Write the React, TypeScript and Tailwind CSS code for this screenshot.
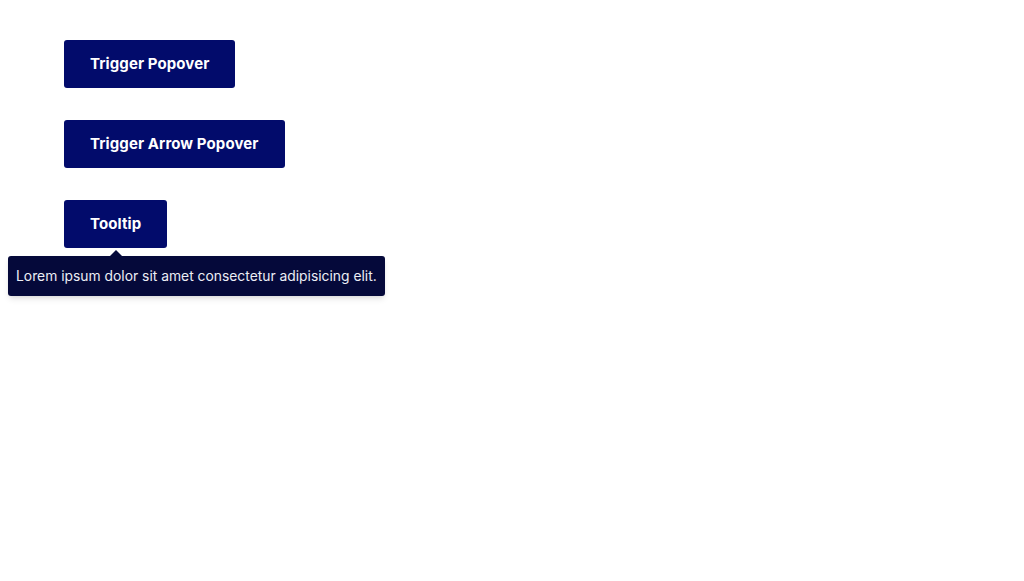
import React from 'react';

const btn =
  'h-12 px-[26px] rounded-[3px] bg-[#020b6b] text-white text-[15px] font-bold tracking-[0.1px] flex items-center';

export default function App() {
  return (
    <div className="min-h-screen bg-white font-['Inter',sans-serif]">
      <div className="flex flex-col items-start gap-8 pl-16 pt-10">
        <button className={btn}>Trigger Popover</button>
        <button className={btn}>Trigger Arrow Popover</button>
        <div className="relative">
          <button className={btn}>Tooltip</button>
          {/* tooltip */}
          <div className="absolute left-[-56px] top-[56px] z-10">
            <div className="absolute left-[102px] top-[-6px] w-0 h-0 border-l-[6px] border-r-[6px] border-b-[6px] border-l-transparent border-r-transparent border-b-[#05093a]" />
            <div className="h-10 px-2 flex items-center whitespace-nowrap rounded-[3px] bg-[#05093a] text-[#eceef5] text-[13.85px] shadow-md">
              Lorem ipsum dolor sit amet consectetur adipisicing elit.
            </div>
          </div>
        </div>
      </div>
    </div>
  );
}
